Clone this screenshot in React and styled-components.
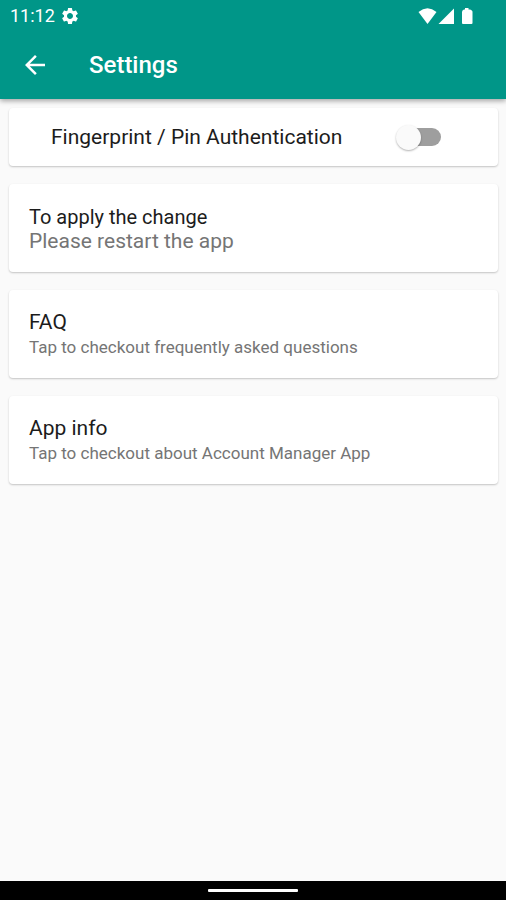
import React from 'react';
import styled, { createGlobalStyle } from 'styled-components';
import { MdArrowBack, MdSettings } from 'react-icons/md';


const GlobalStyle = createGlobalStyle`
    body {
        margin: 0;
        background-color: #fafafa;
        font-family: Roboto, "Liberation Sans", sans-serif;
    }
`

const Screen = styled.div`
    display: flex;
    flex-direction: column;
    min-height: 100vh;
`

const Header = styled.header`
    position: relative;
    color: #fff;
    background-color: #009688;
    box-shadow: 0 2px 5px rgba(0, 0, 0, 0.35);
`

const StatusBar = styled.div`
    display: flex;
    align-items: center;
    justify-content: space-between;
    height: 31px;
    padding: 0 32px 0 10px;
`

const StatusGroup = styled.div`
    display: flex;
    align-items: center;
    gap: 5px;
    font-size: 18px;
    line-height: 20px;
`

const Toolbar = styled.div`
    display: flex;
    align-items: center;
    gap: 35px;
    height: 68px;
    padding: 0 16px;
`

const BackButton = styled.button`
    display: flex;
    padding: 4px;
    border: none;
    color: inherit;
    background: none;
    cursor: pointer;
`

const Title = styled.h1`
    margin: 0;
    font-size: 24px;
    font-weight: 500;
    line-height: 28px;
`

const SettingsList = styled.main`
    display: flex;
    flex: 1;
    flex-direction: column;
    gap: 18px;
    padding: 9px 8px 18px 9px;
`

const Card = styled.section`
    border-radius: 4px;
    background-color: #fff;
    box-shadow: 0 1px 2px rgba(0, 0, 0, 0.22);
`

const SwitchRow = styled.label`
    display: flex;
    align-items: center;
    justify-content: space-between;
    height: 58px;
    padding: 0 57px 0 42px;
    color: #1c1c1c;
    font-size: 21px;
    line-height: 24px;
    cursor: pointer;
`

const Switch = styled.input`
    display: flex;
    align-items: center;
    flex: none;
    width: 45px;
    height: 26px;
    margin: 0;
    appearance: none;
    cursor: pointer;

    &::before {
        content: '';
        flex: none;
        width: 40px;
        height: 18px;
        margin-left: 5px;
        border-radius: 9px;
        background-color: ${props => props.checked ? '#80cbc4' : '#9e9e9e'};
    }

    &::after {
        content: '';
        flex: none;
        width: 25px;
        height: 25px;
        margin-left: ${props => props.checked ? -25 : -45}px;
        border-radius: 50%;
        background-color: ${props => props.checked ? '#009688' : '#fafafa'};
        box-shadow: 0 1px 2px rgba(0, 0, 0, 0.3);
    }
`

const Tile = styled.button`
    display: flex;
    flex-direction: column;
    justify-content: center;
    width: 100%;
    height: 88px;
    padding: 2px 20px 0;
    border: none;
    border-radius: 4px;
    font-family: inherit;
    text-align: left;
    background: none;
    cursor: pointer;
`

const TileTitle = styled.span`
    color: #1c1c1c;
    font-size: ${props => props.$notice ? 20 : 21}px;
    line-height: 24px;
`

const TileText = styled.span`
    color: #757575;
    font-size: ${props => props.$notice ? 21 : 17}px;
    line-height: ${props => props.$notice ? 24 : 26}px;
`

const NavigationBar = styled.footer`
    display: flex;
    align-items: center;
    justify-content: center;
    height: 19px;
    background-color: #000;
`

const HomeHandle = styled.div`
    width: 90px;
    height: 3px;
    border-radius: 1px;
    background-color: #fff;
`

const tiles = [
    { title: 'To apply the change', text: 'Please restart the app', notice: true },
    { title: 'FAQ', text: 'Tap to checkout frequently asked questions' },
    { title: 'App info', text: 'Tap to checkout about Account Manager App' },
]

const StatusIcons = () => (
    <svg width="56" height="18" viewBox="0 0 56 18" fill="#fff" aria-hidden="true">
        <path d="M0.500 4.900Q9.500 -2.200 18.500 4.900L9.500 17Z" />
        <path d="M20.500 17L36 1.500V17Z" />
        <path d="M47 1H50.500V2.500H51.500Q54.500 3 54.500 5V16Q54.500 17 53.500 17H45Q44 17 44 16V5Q44 3 46 2.500H47Z" />
    </svg>
)

export default class App extends React.Component {

    state = {
        authEnabled: false,
    }

    handleToggle = (e) => {
        this.setState({ authEnabled: e.target.checked });
    }

    render() {
        return (
            <Screen>
                <GlobalStyle />

                <Header>
                    <StatusBar>
                        <StatusGroup>
                            <span>11:12</span>
                            <MdSettings size={20} />
                        </StatusGroup>
                        <StatusIcons />
                    </StatusBar>
                    <Toolbar>
                        <BackButton aria-label="Back">
                            <MdArrowBack size={30} />
                        </BackButton>
                        <Title>Settings</Title>
                    </Toolbar>
                </Header>

                <SettingsList>
                    <Card>
                        <SwitchRow>
                            Fingerprint / Pin Authentication
                            <Switch
                                type="checkbox"
                                checked={this.state.authEnabled}
                                onChange={this.handleToggle}
                            />
                        </SwitchRow>
                    </Card>

                    {tiles.map(tile => (
                        <Card key={tile.title}>
                            <Tile>
                                <TileTitle $notice={tile.notice}>{tile.title}</TileTitle>
                                <TileText $notice={tile.notice}>{tile.text}</TileText>
                            </Tile>
                        </Card>
                    ))}
                </SettingsList>

                <NavigationBar>
                    <HomeHandle />
                </NavigationBar>
            </Screen>
        );
    }
}
